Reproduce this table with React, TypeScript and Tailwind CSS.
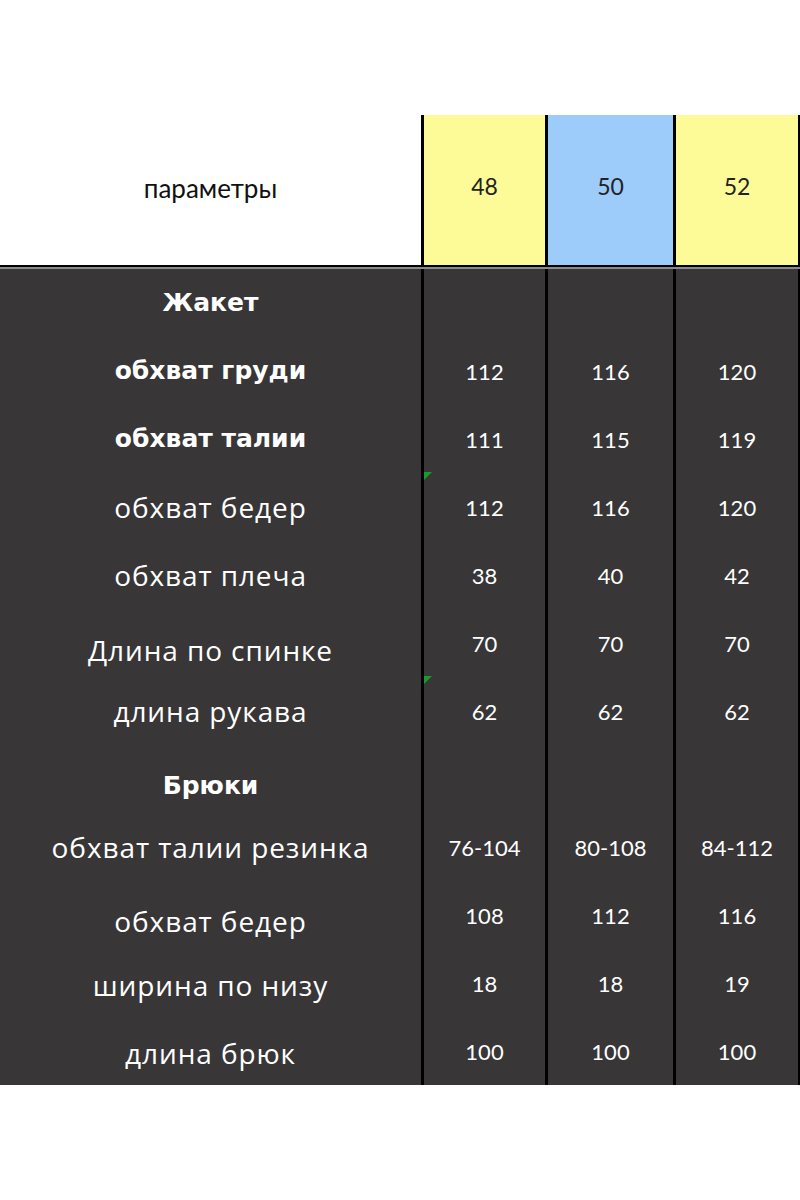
const rows: { label: string; bold?: boolean; values: string[]; labelShift?: string; marker?: boolean }[] = [
  { label: "Жакет", bold: true, values: ["", "", ""] },
  { label: "обхват груди", bold: true, values: ["112", "116", "120"] },
  { label: "обхват талии", bold: true, values: ["111", "115", "119"] },
  { label: "обхват бедер", values: ["112", "116", "120"], marker: true },
  { label: "обхват плеча", values: ["38", "40", "42"] },
  { label: "Длина по спинке", values: ["70", "70", "70"], labelShift: "pt-[14px]" },
  { label: "длина рукава", values: ["62", "62", "62"], marker: true },
  { label: "Брюки", bold: true, values: ["", "", ""], labelShift: "pt-[14px]" },
  { label: "обхват талии резинка", values: ["76-104", "80-108", "84-112"] },
  { label: "обхват бедер", values: ["108", "112", "116"], labelShift: "pt-[12px]" },
  { label: "ширина по низу", values: ["18", "18", "19"], labelShift: "pt-[4px]" },
  { label: "длина брюк", values: ["100", "100", "100"], labelShift: "pt-[4px]" },
];

const widths = ["w-[124px]", "w-[128px]", "w-[127px] border-r-2"];

export default function App() {
  return (
    <div className="w-[800px] h-[1200px] bg-white pt-[115px] font-['Open_Sans',sans-serif]">
      <div className="flex h-[152px] border-b-2 border-black">
        <div className="w-[421px] flex items-center justify-center text-[26px] text-[#111] font-['Lato',sans-serif] pb-1">
          параметры
        </div>
        <div className="w-[124px] border-l-[3px] border-black bg-[#fdfb97] flex items-center justify-center text-[23px] text-[#222] font-['Lato',sans-serif] pb-2">48</div>
        <div className="w-[128px] border-l-[3px] border-black bg-[#9dcbfa] flex items-center justify-center text-[23px] text-[#222] font-['Lato',sans-serif] pb-2">50</div>
        <div className="w-[127px] border-l-[3px] border-r-2 border-black bg-[#fdfb97] flex items-center justify-center text-[23px] text-[#222] font-['Lato',sans-serif] pb-2">52</div>
      </div>
      <div className="h-[2px] bg-[#8a8a8a]" />
      <div className="bg-[#383636]">
        {rows.map((r, i) => (
          <div key={i} className="flex h-[68px]">
            <div
              className={`w-[421px] flex items-center justify-center text-white ${r.labelShift ?? ""} ${
                r.bold ? "font-['DejaVu_Sans',sans-serif] font-bold text-[25px]" : "text-[28px] tracking-[0.9px]"
              }`}
            >
              {r.label}
            </div>
            {r.values.map((v, j) => (
              <div
                key={j}
                className={`relative ${widths[j]} border-l-[3px] border-black flex items-center justify-center text-white text-[22px] font-['Lato',sans-serif]`}
              >
                {j === 0 && r.marker && (
                  <span className="absolute -top-[1px] left-0 w-0 h-0 border-t-[8px] border-r-[8px] border-t-[#1a9a2a] border-r-transparent" />
                )}
                {v}
              </div>
            ))}
          </div>
        ))}
      </div>
    </div>
  );
}
